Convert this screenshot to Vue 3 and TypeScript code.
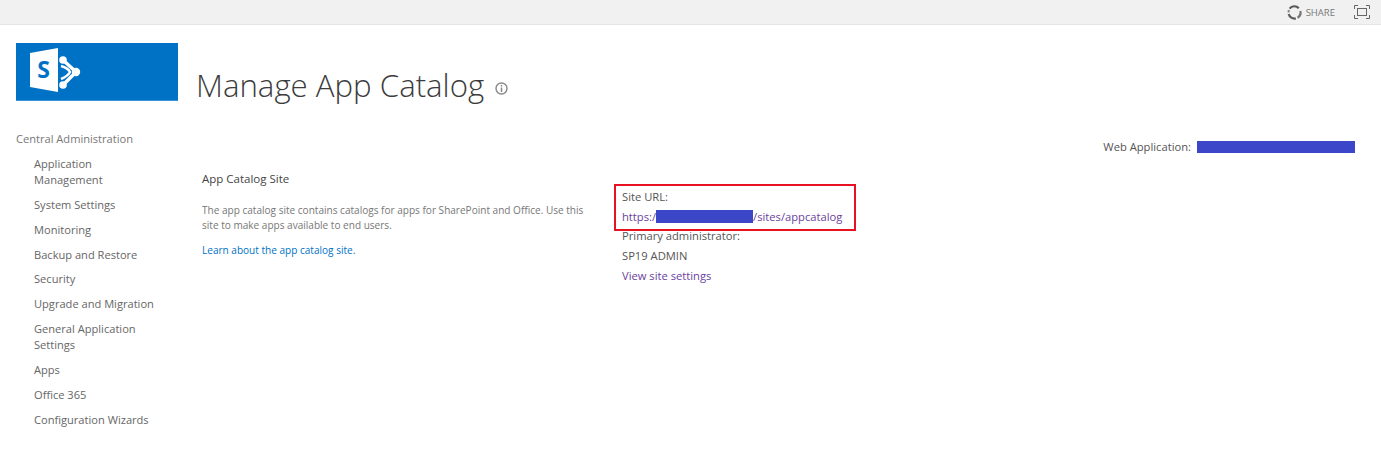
<script setup lang="ts">
const groups: string[] = [
  'Application Management',
  'System Settings',
  'Monitoring',
  'Backup and Restore',
  'Security',
  'Upgrade and Migration',
  'General Application Settings',
  'Apps',
  'Office 365',
  'Configuration Wizards',
]
</script>

<template>
  <div class="page">
    <header class="ribbon">
      <span class="share">
        <svg class="sync" width="15" height="15" viewBox="0 0 15 15" fill="none">
          <path d="M2.600 3.600A6 6 0 0 1 11.800 3.200" stroke="#5a5a5a" stroke-width="2.200" />
          <path d="M13.300 6A6 6 0 0 1 10.600 12.700" stroke="#777" stroke-width="2.200" />
          <path d="M8.800 13.400A6 6 0 0 1 1.700 9" stroke="#5a5a5a" stroke-width="2.200" />
          <path d="M1.500 7.500 1.800 5" stroke="#888" stroke-width="2" />
        </svg>
        <span>SHARE</span>
      </span>
      <svg class="focus" width="16" height="14" viewBox="0 0 16 14" fill="none" stroke="#666">
        <rect x="3.500" y="3.500" width="9" height="7" />
        <path d="M.5 4V.5H4M12 .5h3.500V4M.5 10v3.500H4M12 13.500h3.500V10" />
      </svg>
    </header>

    <div class="body">
      <aside class="side">
        <div class="logo">
          <svg width="80" height="57" viewBox="0 0 80 57">
            <path d="M14 10 42 5V49L14 44Z" fill="#fff" />
            <text x="27.500" y="35" text-anchor="middle" class="logo-s">S</text>
            <path d="M47 17 60 29 47 42" fill="none" stroke="#fff" stroke-width="3.500" stroke-linejoin="round" />
            <path d="M45 23Q52 25 54 29 52 33 45 36" fill="none" stroke="#fff" stroke-width="2.500" />
            <circle cx="47" cy="17" r="3.800" fill="#fff" />
            <circle cx="47" cy="42" r="3.800" fill="#fff" />
            <circle cx="60" cy="29" r="4.200" fill="#fff" />
          </svg>
        </div>
        <nav class="nav">
          <div class="nav-head">Central Administration</div>
          <a v-for="g in groups" :key="g" class="nav-item">{{ g }}</a>
        </nav>
      </aside>

      <main class="main">
        <h1 class="title">
          Manage App Catalog
          <svg class="info" width="13" height="13" viewBox="0 0 13 13" fill="none">
            <circle cx="6.500" cy="6.500" r="5.500" stroke="#888" stroke-width="1.400" />
            <path d="M6.500 5.500V10M6.500 3V4.500" stroke="#888" stroke-width="1.500" />
          </svg>
        </h1>

        <div class="webapp">
          <span>Web Application:</span>
          <span class="mask mask-app"></span>
        </div>

        <section class="columns">
          <div class="left">
            <h2 class="sec-title">App Catalog Site</h2>
            <p class="desc">The app catalog site contains catalogs for apps for SharePoint and Office. Use this site to make apps available to end users.</p>
            <a class="learn">Learn about the app catalog site.</a>
          </div>
          <div class="right">
            <div class="callout">
              <div class="line">Site URL:</div>
              <div class="line url">https:/<span class="mask mask-url"></span>/sites/appcatalog</div>
            </div>
            <div class="rest">
              <div class="line">Primary administrator:</div>
              <div class="line">SP19 ADMIN</div>
              <div class="line url">View site settings</div>
            </div>
          </div>
        </section>
      </main>
    </div>
  </div>
</template>

<style>
html, body { margin: 0; background: #fff; }
</style>

<style scoped>
.page {
  width: 1381px;
  height: 473px;
  overflow: hidden;
  font-family: "Open Sans", "Noto Sans", sans-serif;
  color: #555;
}
.ribbon {
  height: 25px;
  background: #f1f1f1;
  border-bottom: 1px solid #e6e6e6;
  display: flex;
  justify-content: flex-end;
  align-items: center;
  padding-right: 11px;
  box-sizing: border-box;
  gap: 19px;
}
.share {
  display: flex;
  align-items: center;
  gap: 4px;
  font-size: 9.500px;
  color: #777;
}
.body { display: flex; }
.side { width: 181px; padding-left: 16px; box-sizing: border-box; flex: none; }
.logo {
  width: 162px;
  height: 58px;
  margin-top: 18px;
  background: #0072c6;
  border-bottom: 1px solid #3d93d4;
  box-sizing: border-box;
}
.logo svg { display: block; }
.logo-s { font: 700 23px "Open Sans", sans-serif; fill: #0072c6; }
.nav { margin-top: 30px; font-size: 11.100px; color: #666; }
.nav-head { line-height: 16px; margin-bottom: 9px; color: #777; }
.nav-item {
  display: block;
  padding-left: 18px;
  width: 128px;
  line-height: 16px;
  margin-bottom: 8.850px;
}
.main { flex: 1; position: relative; padding-left: 16px; }
.title {
  margin: 37px 0 0 -1px;
  font-family: "Open Sans", sans-serif;
  font-weight: 300;
  font-size: 31.200px;
  line-height: 46px;
  color: #3c3c3c;
  display: flex;
  align-items: center;
  gap: 11px;
}
.info { margin-top: 7px; }
.webapp {
  display: flex;
  justify-content: flex-end;
  align-items: center;
  gap: 6px;
  margin-top: 31px;
  padding-right: 26px;
  font-size: 11.200px;
  line-height: 16px;
}
.mask { display: inline-block; background: #3c46c8; }
.mask-app { width: 158px; height: 12px; }
.mask-url { width: 97px; height: 13px; vertical-align: -2px; }
.columns { display: flex; margin-top: 16px; }
.left { width: 395px; padding-left: 5px; box-sizing: border-box; flex: none; }
.sec-title { margin: 0; font-size: 11.500px; font-weight: 400; line-height: 16px; color: #444; }
.desc { margin: 16px 0 0; font-size: 10.050px; line-height: 15px; color: #777; }
.learn { display: block; margin-top: 10px; font-size: 10.050px; line-height: 15px; color: #0072c6; }
.right { margin-left: 22px; margin-top: 13px; }
.callout {
  width: 242px;
  height: 47px;
  border: 2px solid #e81123;
  box-sizing: border-box;
  padding: 1px 0 0 6px;
}
.line { font-size: 11.200px; line-height: 20px; white-space: nowrap; }
.url { color: #6b3fa0; }
.rest { padding-left: 8px; margin-top: -5px; }
</style>
